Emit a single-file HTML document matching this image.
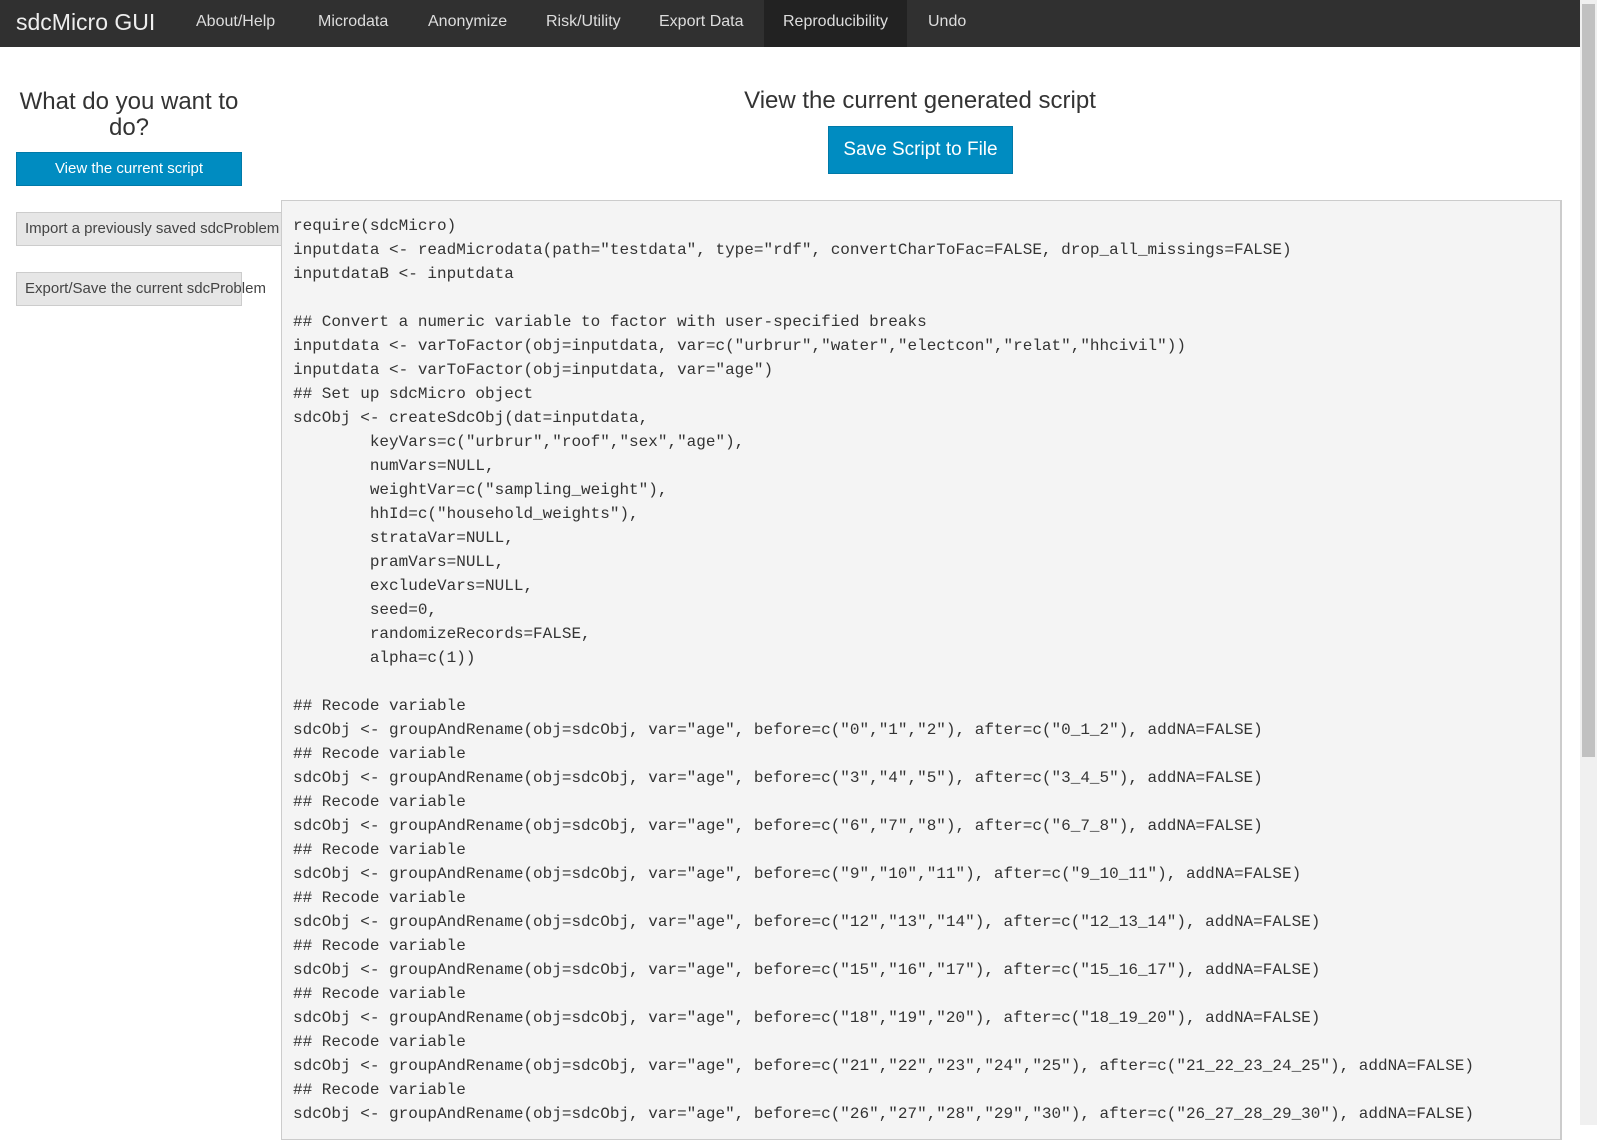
<!DOCTYPE html>
<html><head><meta charset="utf-8">
<style>
*{box-sizing:border-box;margin:0;padding:0}
html,body{width:1597px;height:1125px;overflow:hidden;background:#fff;font-family:"Liberation Sans",sans-serif;color:#333}
.nav{position:absolute;left:0;top:0;width:1580px;height:47px;background:#303030}
.nav span{position:absolute;top:0;line-height:44px;color:#ddd;font-size:16px;white-space:nowrap}
.brand{font-size:23px !important;color:#eee !important;left:16px}
.act{background:#222;height:47px;padding:0 19px}
h3{position:absolute;font-weight:300;font-size:24px;color:#333;text-align:center;line-height:26px}
.btn{position:absolute;font-size:15px;white-space:nowrap;overflow:hidden;line-height:32px}
.blue{background:#008cc1;color:#fff;border:1px solid #0079a8;text-align:center}
.gray{background:#e6e6e6;border:1px solid #ccc;color:#444;padding-left:8px}
pre{position:absolute;left:281px;top:200px;width:1281px;height:940px;background:#f4f4f4;border:1px solid #ccc;border-right:2px solid #ccc;font-family:"Liberation Mono",monospace;font-size:16px;line-height:24px;padding:13px 0 0 11px;color:#333;overflow:hidden}
.sb{position:absolute;left:1580px;top:0;width:17px;height:1125px;background:#f0f0f0}
.th{position:absolute;left:1582px;top:4px;width:13px;height:753px;background:#c1c1c1}
</style></head><body>
<div class="nav">
<span class="brand">sdcMicro GUI</span>
<span style="left:196px">About/Help</span>
<span style="left:318px">Microdata</span>
<span style="left:428px">Anonymize</span>
<span style="left:546px">Risk/Utility</span>
<span style="left:659px">Export Data</span>
<span class="act" style="left:764px">Reproducibility</span>
<span style="left:928px">Undo</span>
</div>
<h3 style="left:10px;top:89px;width:238px">What do you want to do?</h3>
<div class="btn blue" style="left:16px;top:152px;width:226px;height:34px">View the current script</div>
<div class="btn gray" style="left:16px;top:212px;width:226px;height:34px;width:265px;border-right:none"><span style="display:inline-block">Import a previously saved sdcProblem</span></div>
<div class="btn gray" style="left:16px;top:272px;width:226px;height:34px;overflow:visible">Export/Save the current sdcProblem</div>
<h3 style="left:620px;top:88px;width:600px">View the current generated script</h3>
<div class="btn blue" style="left:828px;top:126px;width:185px;height:48px;line-height:46px;font-size:19px">Save Script to File</div>
<pre>require(sdcMicro)
inputdata &lt;- readMicrodata(path="testdata", type="rdf", convertCharToFac=FALSE, drop_all_missings=FALSE)
inputdataB &lt;- inputdata

## Convert a numeric variable to factor with user-specified breaks
inputdata &lt;- varToFactor(obj=inputdata, var=c("urbrur","water","electcon","relat","hhcivil"))
inputdata &lt;- varToFactor(obj=inputdata, var="age")
## Set up sdcMicro object
sdcObj &lt;- createSdcObj(dat=inputdata,
        keyVars=c("urbrur","roof","sex","age"),
        numVars=NULL,
        weightVar=c("sampling_weight"),
        hhId=c("household_weights"),
        strataVar=NULL,
        pramVars=NULL,
        excludeVars=NULL,
        seed=0,
        randomizeRecords=FALSE,
        alpha=c(1))

## Recode variable
sdcObj &lt;- groupAndRename(obj=sdcObj, var="age", before=c("0","1","2"), after=c("0_1_2"), addNA=FALSE)
## Recode variable
sdcObj &lt;- groupAndRename(obj=sdcObj, var="age", before=c("3","4","5"), after=c("3_4_5"), addNA=FALSE)
## Recode variable
sdcObj &lt;- groupAndRename(obj=sdcObj, var="age", before=c("6","7","8"), after=c("6_7_8"), addNA=FALSE)
## Recode variable
sdcObj &lt;- groupAndRename(obj=sdcObj, var="age", before=c("9","10","11"), after=c("9_10_11"), addNA=FALSE)
## Recode variable
sdcObj &lt;- groupAndRename(obj=sdcObj, var="age", before=c("12","13","14"), after=c("12_13_14"), addNA=FALSE)
## Recode variable
sdcObj &lt;- groupAndRename(obj=sdcObj, var="age", before=c("15","16","17"), after=c("15_16_17"), addNA=FALSE)
## Recode variable
sdcObj &lt;- groupAndRename(obj=sdcObj, var="age", before=c("18","19","20"), after=c("18_19_20"), addNA=FALSE)
## Recode variable
sdcObj &lt;- groupAndRename(obj=sdcObj, var="age", before=c("21","22","23","24","25"), after=c("21_22_23_24_25"), addNA=FALSE)
## Recode variable
sdcObj &lt;- groupAndRename(obj=sdcObj, var="age", before=c("26","27","28","29","30"), after=c("26_27_28_29_30"), addNA=FALSE)
</pre>
<div class="sb"></div><div class="th"></div>
</body></html>
